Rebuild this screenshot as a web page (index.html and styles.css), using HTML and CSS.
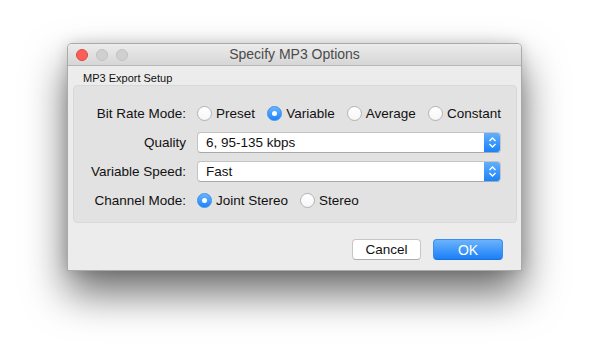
FILE: index.html
```html
<!DOCTYPE html>
<html>
<head>
<meta charset="utf-8">
<link rel="stylesheet" href="styles.css">
</head>
<body>
<div class="window">
  <div class="titlebar">
    <div class="lights">
      <span class="light red"></span>
      <span class="light gray"></span>
      <span class="light gray"></span>
    </div>
    <div class="title">Specify MP3 Options</div>
  </div>
  <div class="content">
    <div class="group-title">MP3 Export Setup</div>
    <div class="group">
      <div class="label">Bit Rate Mode:</div>
      <div class="radios spread">
        <span class="radio"><span class="dot"></span>Preset</span>
        <span class="radio"><span class="dot on"></span>Variable</span>
        <span class="radio"><span class="dot"></span>Average</span>
        <span class="radio"><span class="dot"></span>Constant</span>
      </div>
      <div class="label">Quality</div>
      <div class="popup"><span class="ptext">6, 95-135 kbps</span><span class="stepper"><svg width="9" height="13" viewBox="0 0 9 13"><path d="M1.5 5 L4.5 2 L7.5 5 M1.5 8 L4.5 11 L7.5 8" fill="none" stroke="#fff" stroke-width="1.4"/></svg></span></div>
      <div class="label">Variable Speed:</div>
      <div class="popup"><span class="ptext">Fast</span><span class="stepper"><svg width="9" height="13" viewBox="0 0 9 13"><path d="M1.5 5 L4.5 2 L7.5 5 M1.5 8 L4.5 11 L7.5 8" fill="none" stroke="#fff" stroke-width="1.4"/></svg></span></div>
      <div class="label">Channel Mode:</div>
      <div class="radios">
        <span class="radio"><span class="dot on"></span>Joint Stereo</span>
        <span class="radio"><span class="dot"></span>Stereo</span>
      </div>
    </div>
    <div class="buttons">
      <button class="btn">Cancel</button>
      <button class="btn primary">OK</button>
    </div>
  </div>
</div>
</body>
</html>
```
FILE: styles.css
```css
* { box-sizing: border-box; }
html, body { margin: 0; padding: 0; background: #fff; }
html { height: 100%; }
body {
  min-height: 100%;
  height: 363px;
  font-family: "Liberation Sans", Arial, sans-serif;
  font-size: 13.5px;
  color: #111;
  padding: 43px 0 0 67px;
}
.window {
  width: 455px;
  height: 228px;
  background: #ececec;
  border: 1px solid rgba(0,0,0,0.28);
  border-radius: 5px 5px 0 0;
  box-shadow: 0 22px 42px rgba(0,0,0,0.58), 0 0 14px rgba(0,0,0,0.14);
  overflow: hidden;
}
.titlebar {
  position: relative;
  height: 22px;
  background: linear-gradient(#ececec, #d6d6d6);
  border-bottom: 1px solid #b6b6b6;
  display: flex;
  align-items: center;
}
.lights {
  display: flex;
  gap: 8px;
  padding-left: 8px;
}
.light {
  width: 12px;
  height: 12px;
  border-radius: 50%;
}
.light.red { background: #fc5f57; border: 1px solid #df4741; }
.light.gray { background: #d0d0d0; border: 1px solid #c2c2c2; }
.title {
  position: absolute;
  left: 0; right: 0; top: 0;
  line-height: 21px;
  text-align: center;
  color: #4b4b4b;
  font-size: 14px;
}
.content {
  padding: 6px 4px 0 5px;
}
.group-title {
  font-size: 11px;
  padding-left: 10px;
  height: 13px;
  line-height: 13px;
}
.group {
  height: 138px;
  background: #e2e2e2;
  border: 1px solid #d8d8d8;
  border-radius: 4px;
  display: grid;
  grid-template-columns: 112px 304px;
  grid-auto-rows: 21px;
  column-gap: 11px;
  row-gap: 8px;
  padding-top: 17px;
  align-content: start;
}
.label {
  text-align: right;
  line-height: 21px;
}
.radios {
  display: flex;
  align-items: center;
  gap: 12px;
}
.radios.spread { justify-content: space-between; gap: 0; }
.radio {
  display: flex;
  align-items: center;
  gap: 4px;
}
.dot {
  width: 15px;
  height: 15px;
  border-radius: 50%;
  background: linear-gradient(#fff, #f6f6f6);
  border: 1px solid #b3b3b3;
  display: flex;
  align-items: center;
  justify-content: center;
}
.dot.on {
  background: linear-gradient(#6bb4fb, #1c84fb);
  border-color: #3c8ef0;
}
.dot.on::after {
  content: "";
  width: 5px;
  height: 5px;
  border-radius: 50%;
  background: #fff;
}
.popup {
  height: 21px;
  background: #fff;
  border: 1px solid #c4c4c4;
  border-bottom-color: #a9a9a9;
  border-radius: 4px;
  display: flex;
  align-items: center;
  overflow: hidden;
}
.ptext {
  flex: 1;
  padding-left: 8px;
}
.stepper {
  width: 17px;
  height: 21px;
  margin-right: -1px;
  background: linear-gradient(#67b1fb, #1680fa);
  display: flex;
  align-items: center;
  justify-content: center;
}
.buttons {
  display: flex;
  justify-content: flex-end;
  gap: 12px;
  margin-top: 16px;
  padding-right: 14px;
}
.btn {
  font-family: "Liberation Sans", Arial, sans-serif;
  font-size: 13.5px;
  height: 21px;
  width: 69px;
  padding: 0;
  border-radius: 4px;
  border: 1px solid #c6c6c6;
  border-bottom-color: #adadad;
  background: #fff;
  color: #111;
}
.btn.primary {
  width: 70px;
  font-size: 14px;
  color: #fff;
  border-color: #3a8cf2;
  border-bottom-color: #1e6fd9;
  background: linear-gradient(#6bb3fc, #1a80f9);
}
```
